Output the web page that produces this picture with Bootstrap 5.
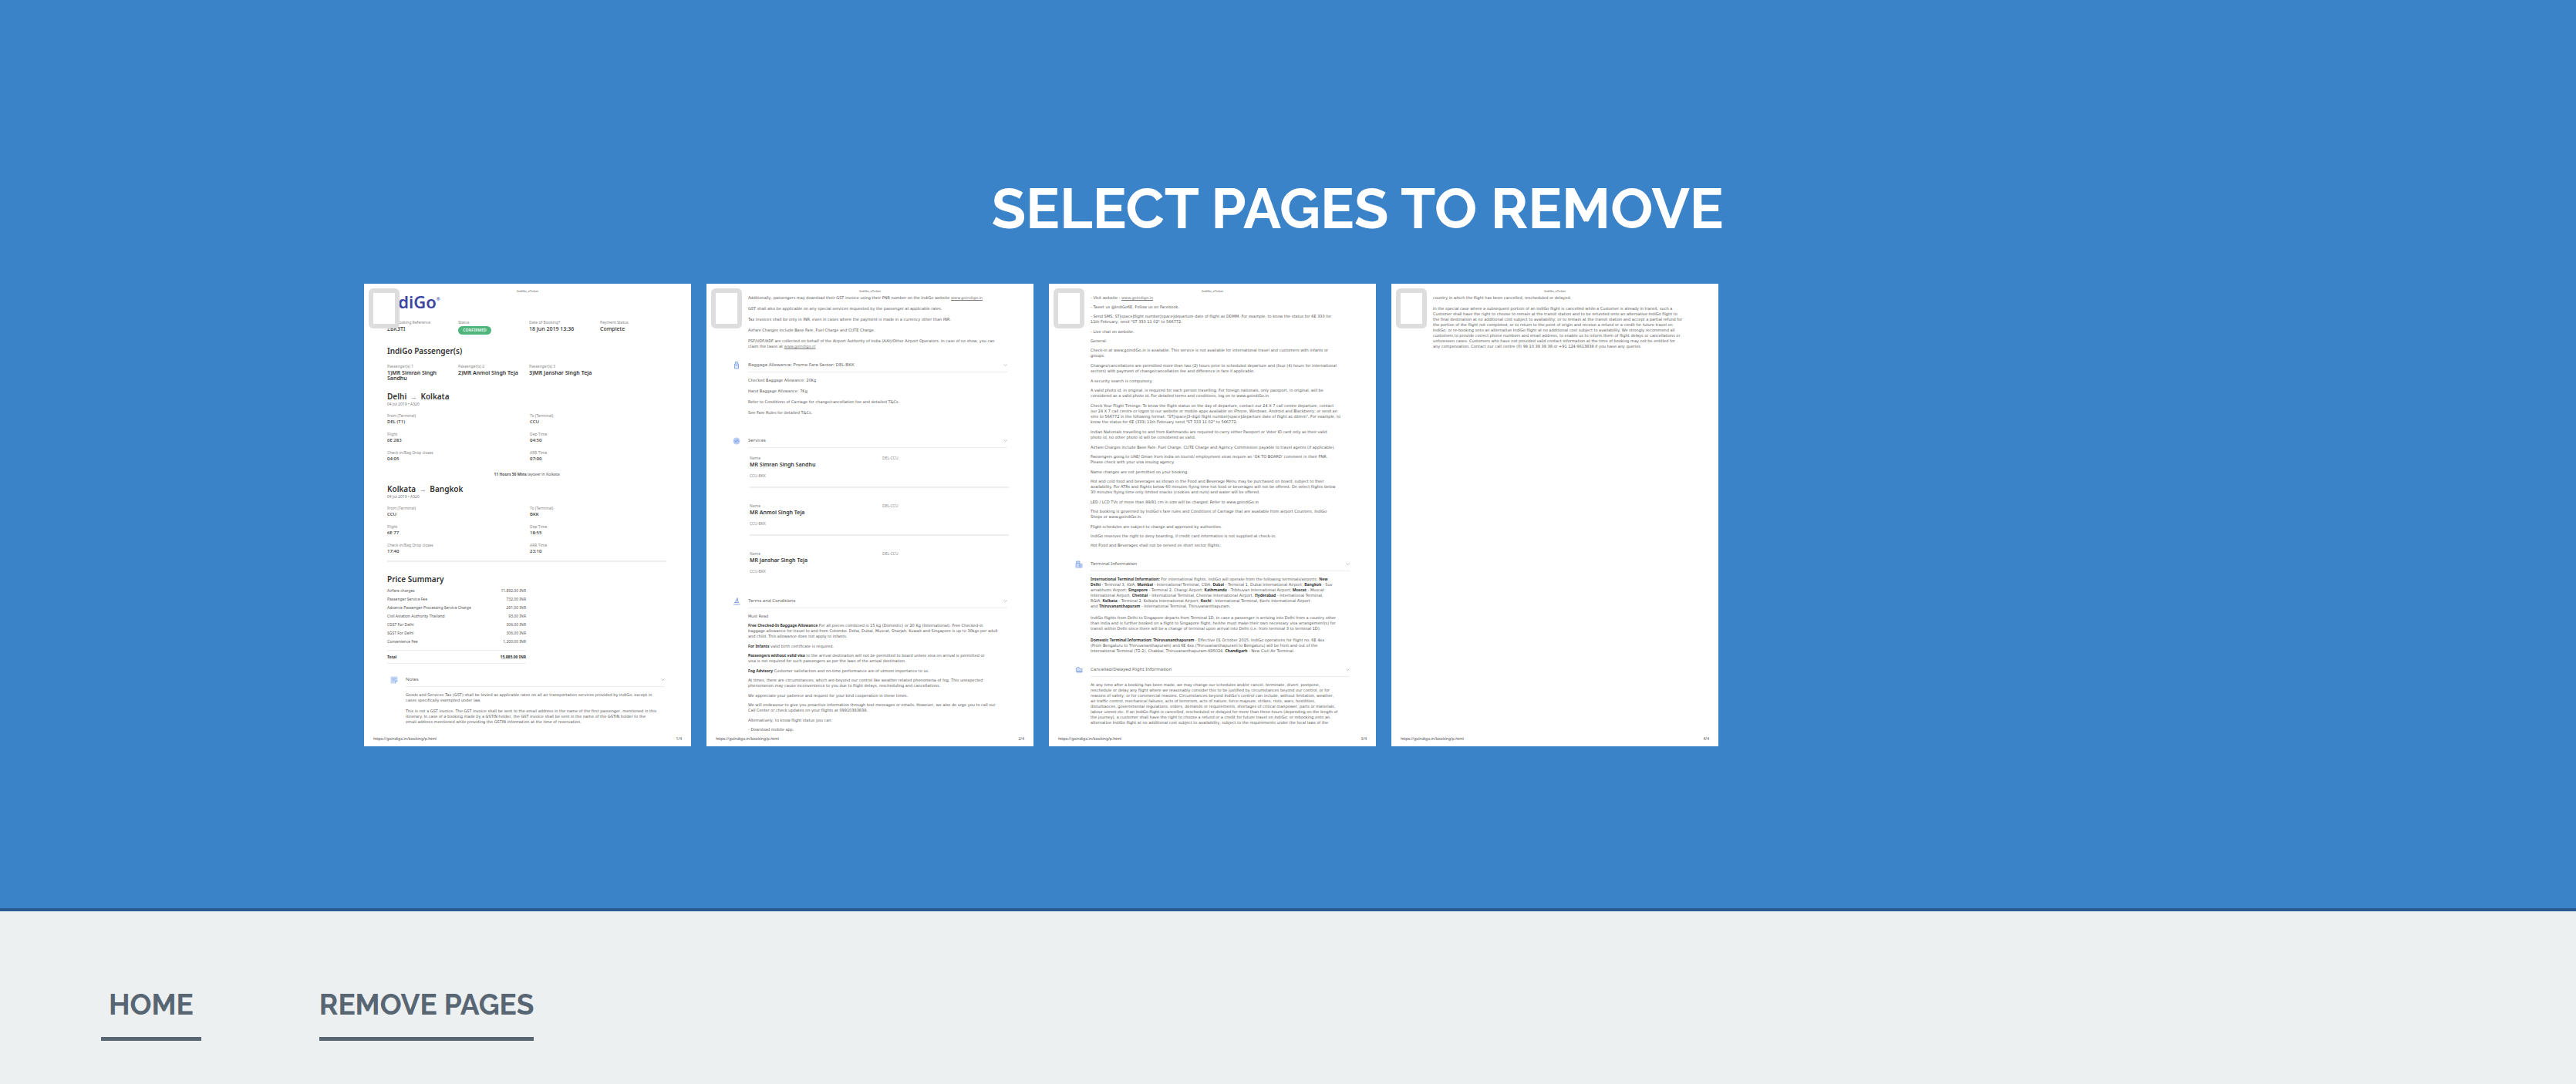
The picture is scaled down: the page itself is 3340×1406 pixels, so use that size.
<!DOCTYPE html>
<html lang="en">
<head>
<meta charset="utf-8">
<meta name="viewport" content="width=device-width, initial-scale=1">
<title>Remove Pages</title>
<link href="https://cdn.jsdelivr.net/npm/bootstrap@5.3.0/dist/css/bootstrap.min.css" rel="stylesheet">
<style>
body{background:#ecf0f1;font-family:Raleway,Lato,"Open Sans",sans-serif}
.hero{background:#3a83c8;border-bottom:4px solid #285a92;padding:230px 292px 210px 472px}
.hero h1{font-size:73px;line-height:80px;font-weight:700;color:#fff;margin-bottom:58px}
.pages{gap:20px}
.sheet{width:424px;height:600px;background:#fff;font-family:"Noto Sans","Open Sans",sans-serif;font-size:5px;line-height:7px;color:#555;padding:7px 12px 7px;white-space:nowrap}
.sheet a{color:#777}
.sheet a,.sheet b{line-height:0}
.pick{appearance:none;width:40px;height:52px;border:6px solid #ddd;border-radius:6px;background:#fff;top:6px;left:6px;margin:0;cursor:pointer}
.pick:checked{background:#3a83c8}
.runhead,.runfoot{font-size:4px;line-height:6px;color:#555}
.runfoot{font-size:5px}
.fields{padding:0 20px 0 18px}
.brand{font-size:22px;line-height:22px;font-weight:600;color:#3d46a3;margin:-1px 0 12px -8px}
.brand sup{font-size:6px;top:-10px}
.c4{width:92px}.c2{width:185px}
.lab{line-height:8px;color:#888;margin-bottom:1px}
.val{font-size:6px;font-weight:500;color:#333}
.bold6{font-size:6px;font-weight:600;color:#333}
.ok{width:43px;height:11px;line-height:11px;border-radius:6px;background:#4fb57c;color:#e4f7ec;font-size:5px;font-weight:700;text-align:center}
.meta{height:20px;margin-bottom:15px}
.meta .val{font-size:7px}
.people{margin:10px 0 14px}
.people .bold6{font-size:7px}
.sheet h2{font-size:10px;line-height:12px;height:12px;font-weight:600;color:#333;margin:0}
.arrow{color:#888;padding:0 2px;font-weight:400;font-size:9px;line-height:0}
.sub{line-height:8px;height:8px;color:#777;margin-bottom:7px}
.pair{margin-bottom:8px}
.lay{line-height:8px;margin:12px 0 9px;text-align:center}
.rule{height:2px;background:#eee}
.price{width:180px;margin-top:4px;border-collapse:separate;border-spacing:0}
.price td,.price th{padding:0;line-height:11px;height:11px;font-weight:400}
.price td{text-align:right}
.total{width:180px;height:18px;line-height:16px;border:solid #eee;border-width:1px 0;margin-top:5px;font-weight:700;color:#333}
.sect{height:18px;padding-left:22px;margin:12px 0 7px}
.sect h3{font-size:6px;line-height:17px;font-weight:400;color:#666;margin:0 0 0 10px;border-bottom:1px solid #eee;width:336px}
.sect svg{width:10px;height:10px;flex:none}
.sect .chev{width:5px;height:5px;margin:6px 0}
.copy{padding-left:42px;font-family:"DejaVu Sans","Noto Sans",sans-serif}
.copy p{margin:0 0 5px}
.copy .long{margin-bottom:6px}
.roomy p{margin-bottom:7px}
.wide-gap p{margin-bottom:8px}
.copy b{color:#333;font-weight:700;font-family:"Noto Sans",sans-serif}
.copy p:last-child{margin-bottom:0}
.first{padding-top:2px}
.guest{padding:2px 20px 0 44px}
.guest .bold6{font-size:7px}
.who{width:172px}
.seat{margin:7px 0 10px}
.guest .rule{margin-bottom:19px}
.crumbs{padding:94px 131px 40px;gap:153px}
.crumbs a{font-size:37px;line-height:50px;font-weight:700;color:#586573;text-decoration:none;padding:2px 0 17px;border-bottom:5px solid #586573}
.crumbs .home{padding-left:10px;padding-right:10px}
</style>
</head>
<body>
<svg class="d-none">
<symbol id="chev" viewBox="0 0 10 10"><path d="M1 3l4 4 4-4" fill="none" stroke="#aaa" stroke-width="1.6"/></symbol>
<symbol id="note" viewBox="0 0 20 20"><path d="M1 1h18v12l-6 6H1z" fill="#c6d8f5"/><path d="M4 6h12M4 10h9M13 19v-6h6" stroke="#8eaee8" stroke-width="1.5" fill="none"/></symbol>
<symbol id="bag" viewBox="0 0 20 20"><path d="M7 5V1h6v4M5 6h10v12H5z" fill="#e3ebfb" stroke="#8ba8e6" stroke-width="2"/><path d="M7 10h6" stroke="#8ba8e6" stroke-width="2"/></symbol>
<symbol id="serv" viewBox="0 0 20 20"><circle cx="10" cy="10" r="9" fill="#b9cdf3"/><path d="M5 8l3 6 4-8 3 6" fill="none" stroke="#7d9de2" stroke-width="1.8"/></symbol>
<symbol id="terms" viewBox="0 0 20 20"><path d="M2 18h17M4 13h12M7 12l5-10 2 10" fill="none" stroke="#8ba8e6" stroke-width="2.4"/></symbol>
<symbol id="gate" viewBox="0 0 20 20"><path d="M2 7h10v11H2zM12 9h6v9h-6zM3 2h9v5H3z" fill="#c6d8f5" stroke="#8ba8e6" stroke-width="1.6"/></symbol>
<symbol id="plane" viewBox="0 0 20 20"><path d="M2 6l7-4 3 5h6v9H4z" fill="#d3e0f8" stroke="#8ba8e6" stroke-width="1.8"/><path d="M4 13h14" stroke="#8ba8e6" stroke-width="2"/></symbol>
</svg>
<main class="hero">
<h1 class="text-center">SELECT PAGES TO REMOVE</h1>
<div class="pages d-flex flex-wrap">

<article class="sheet position-relative d-flex flex-column">
<input class="pick position-absolute" type="checkbox" aria-label="Page 1">
<div class="runhead text-center">IndiGo_eTicket</div>
<div class="fields">
<div class="brand">IndiGo<sup>®</sup></div>
<div class="meta d-flex">
<div class="c4"><div class="lab">PNR/Booking Reference</div><div class="val">ZBK3TI</div></div>
<div class="c4"><div class="lab">Status</div><div class="ok">CONFIRMED</div></div>
<div class="c4"><div class="lab">Date of Booking*</div><div class="val">18 Jun 2019 13:36</div></div>
<div><div class="lab">Payment Status</div><div class="val">Complete</div></div>
</div>
<h2>IndiGo Passenger(s)</h2>
<div class="people d-flex">
<div class="c4"><div class="lab">Passenger(s) 1</div><div class="bold6">1)MR Simran Singh<br>Sandhu</div></div>
<div class="c4"><div class="lab">Passenger(s) 2</div><div class="bold6">2)MR Anmol Singh Teja</div></div>
<div><div class="lab">Passenger(s) 3</div><div class="bold6">3)MR Janshar Singh Teja</div></div>
</div>
<h2>Delhi <span class="arrow">→</span> Kolkata</h2>
<div class="sub">04 Jul 2019 • A320</div>
<div class="pair d-flex"><div class="c2"><div class="lab">From (Terminal)</div><div class="val">DEL (T1)</div></div><div><div class="lab">To (Terminal)</div><div class="val">CCU</div></div></div>
<div class="pair d-flex"><div class="c2"><div class="lab">Flight</div><div class="val">6E 283</div></div><div><div class="lab">Dep Time</div><div class="val">04:50</div></div></div>
<div class="d-flex"><div class="c2"><div class="lab">Check-in/Bag Drop closes</div><div class="val">04:05</div></div><div><div class="lab">ARR Time</div><div class="val">07:00</div></div></div>
<div class="lay"><b>11 Hours 50 Mins</b> layover in Kolkata</div>
<h2>Kolkata <span class="arrow">→</span> Bangkok</h2>
<div class="sub">04 Jul 2019 • A320</div>
<div class="pair d-flex"><div class="c2"><div class="lab">From (Terminal)</div><div class="val">CCU</div></div><div><div class="lab">To (Terminal)</div><div class="val">BKK</div></div></div>
<div class="pair d-flex"><div class="c2"><div class="lab">Flight</div><div class="val">6E 77</div></div><div><div class="lab">Dep Time</div><div class="val">18:55</div></div></div>
<div class="pair d-flex"><div class="c2"><div class="lab">Check-in/Bag Drop closes</div><div class="val">17:40</div></div><div><div class="lab">ARR Time</div><div class="val">23:10</div></div></div>
<div class="rule mb-3"></div>
<h2>Price Summary</h2>
<table class="price">
<tr><th>Airfare charges</th><td>11,892.00 INR</td></tr>
<tr><th>Passenger Service Fee</th><td>732.00 INR</td></tr>
<tr><th>Advance Passenger Processing Service Charge</th><td>291.00 INR</td></tr>
<tr><th>Civil Aviation Authority Thailand</th><td>93.00 INR</td></tr>
<tr><th>CGST For Delhi</th><td>306.00 INR</td></tr>
<tr><th>SGST For Delhi</th><td>306.00 INR</td></tr>
<tr><th>Convenience Fee</th><td>1,200.00 INR</td></tr>
</table>
<div class="total d-flex justify-content-between"><span>Total</span><span>15,885.00 INR</span></div>
</div>
<div class="sect d-flex align-items-center"><svg><use href="#note"/></svg><h3 class="d-flex justify-content-between">Notes<svg class="chev"><use href="#chev"/></svg></h3></div>
<div class="copy roomy"><p>Goods and Services Tax (GST) shall be levied as applicable rates on all air transportation services provided by IndiGo, except in<br>cases specifically exempted under law.</p>
<p>This is not a GST invoice. The GST invoice shall be sent to the email address in the name of the first passenger, mentioned in this<br>itinerary. In case of a booking made by a GSTIN holder, the GST invoice shall be sent in the name of the GSTIN holder to the<br>email address mentioned while providing the GSTIN information at the time of reservation.</p></div>
<div class="runfoot d-flex justify-content-between mt-auto"><span>https://goindigo.in/booking/p.html</span><span>1/4</span></div>
</article>

<article class="sheet position-relative d-flex flex-column">
<input class="pick position-absolute" type="checkbox" aria-label="Page 2">
<div class="runhead text-center">IndiGo_eTicket</div>
<div class="copy roomy first"><p>Additionally, passengers may download their GST invoice using their PNR number on the IndiGo website <a href="#">www.goindigo.in</a></p>
<p>GST shall also be applicable on any special services requested by the passenger at applicable rates.</p>
<p>Tax invoices shall be only in INR, even in cases where the payment is made in a currency other than INR.</p>
<p>Airfare Charges include Base Fare, Fuel Charge and CUTE Charge.</p>
<p>PSF/UDF/ADF are collected on behalf of the Airport Authority of India (AAI)/Other Airport Operators. In case of no show, you can<br>claim the taxes at <a href="#">www.goindigo.in</a></p></div>
<div class="sect d-flex align-items-center"><svg><use href="#bag"/></svg><h3 class="d-flex justify-content-between">Baggage Allowance: Promo Fare Sector: DEL-BKK<svg class="chev"><use href="#chev"/></svg></h3></div>
<div class="copy roomy"><p>Checked Baggage Allowance: 20Kg</p><p>Hand Baggage Allowance: 7Kg</p><p>Refer to Conditions of Carriage for change/cancellation fee and detailed T&amp;Cs.</p><p>See Fare Rules for detailed T&amp;Cs.</p></div>
<div class="sect d-flex align-items-center mt-4"><svg><use href="#serv"/></svg><h3 class="d-flex justify-content-between">Services<svg class="chev"><use href="#chev"/></svg></h3></div>
<div class="guest">
<div class="d-flex"><div class="who"><div class="lab">Name</div><div class="bold6">MR Simran Singh Sandhu</div></div><div class="lab">DEL-CCU</div></div>
<div class="lab seat">CCU-BKK</div><div class="rule"></div>
<div class="d-flex"><div class="who"><div class="lab">Name</div><div class="bold6">MR Anmol Singh Teja</div></div><div class="lab">DEL-CCU</div></div>
<div class="lab seat">CCU-BKK</div><div class="rule"></div>
<div class="d-flex"><div class="who"><div class="lab">Name</div><div class="bold6">MR Janshar Singh Teja</div></div><div class="lab">DEL-CCU</div></div>
<div class="lab seat">CCU-BKK</div>
</div>
<div class="sect d-flex align-items-center mt-3"><svg><use href="#terms"/></svg><h3 class="d-flex justify-content-between">Terms and Conditions<svg class="chev"><use href="#chev"/></svg></h3></div>
<div class="copy"><p>Must Read</p>
<p class="long"><b>Free Checked-In Baggage Allowance</b> For all pieces combined is 15 kg (Domestic) or 20 Kg (International). Free Checked-in<br>baggage allowance for travel to and from Colombo, Doha, Dubai, Muscat, Sharjah, Kuwait and Singapore is up to 30kgs per adult<br>and child. This allowance does not apply to infants.</p>
<p><b>For Infants</b> valid birth certificate is required.</p>
<p class="long"><b>Passengers without valid visa</b> to the arrival destination will not be permitted to board unless visa on arrival is permitted or<br>visa is not required for such passengers as per the laws of the arrival destination.</p>
<p><b>Fog Advisory</b> Customer satisfaction and on-time performance are of utmost importance to us.</p>
<p class="long">At times, there are circumstances, which are beyond our control like weather related phenomena of fog. This unexpected<br>phenomenon may cause inconvenience to you due to flight delays, rescheduling and cancellations.</p>
<p>We appreciate your patience and request for your kind cooperation in these times.</p>
<p class="long">We will endeavour to give you proactive information through text messages or emails. However, we also do urge you to call our<br>Call Center or check updates on your flights at 09910383838.</p>
<p>Alternatively, to know flight status you can:</p>
<p>- Download mobile app.</p></div>
<div class="runfoot d-flex justify-content-between mt-auto"><span>https://goindigo.in/booking/p.html</span><span>2/4</span></div>
</article>

<article class="sheet position-relative d-flex flex-column">
<input class="pick position-absolute" type="checkbox" aria-label="Page 3">
<div class="runhead text-center">IndiGo_eTicket</div>
<div class="copy first"><p>- Visit website - <a href="#">www.goindigo.in</a></p>
<p>- Tweet us @IndiGo6E, Follow us on Facebook.</p>
<p class="long">- Send SMS, ST[space]flight number[space]departure date of flight as DDMM. For example, to know the status for 6E 333 for<br>11th February, send "ST 333 11 02" to 566772.</p>
<p>- Live chat on website.</p>
<p>General:</p>
<p class="long">Check-in at www.goindiGo.in is available. This service is not available for international travel and customers with infants or<br>groups.</p>
<p class="long">Changes/cancellations are permitted more than two (2) hours prior to scheduled departure and (four (4) hours for international<br>sectors) with payment of change/cancellation fee and difference in fare if applicable.</p>
<p>A security search is compulsory.</p>
<p class="long">A valid photo id, in original, is required for each person travelling. For foreign nationals, only passport, in original, will be<br>considered as a valid photo id. For detailed terms and conditions, log on to www.goindiGo.in</p>
<p class="long">Check Your Flight Timings: To know the flight status on the day of departure, contact our 24 X 7 call centre departure, contact<br>our 24 X 7 call centre or logon to our website or mobile apps available on iPhone, Windows, Android and Blackberry; or send an<br>sms to 566772 in the following format: "ST[space]3-digit flight number[space]departure date of flight as ddmm". For example, to<br>know the status for 6E (333) 11th February send "ST 333 11 02" to 566772.</p>
<p class="long">Indian Nationals travelling to and from Kathmandu are required to carry either Passport or Voter ID card only as their valid<br>photo id, no other photo id will be considered as valid.</p>
<p>Airfare Charges include Base Fare, Fuel Charge, CUTE Charge and Agency Commission payable to travel agents (if applicable).</p>
<p class="long">Passengers going to UAE/ Oman from India on tourist/ employment visas require an 'OK TO BOARD' comment in their PNR.<br>Please check with your visa issuing agency.</p>
<p>Name changes are not permitted on your booking.</p>
<p class="long">Hot and cold food and beverages as shown in the Food and Beverage Menu may be purchased on board, subject to their<br>availability. For ATRs and flights below 60 minutes flying time hot food or beverages will not be offered. On select flights below<br>30 minutes flying time only limited snacks (cookies and nuts) and water will be offered.</p>
<p>LED / LCD TVs of more than 99/81 cm in size will be charged. Refer to www.goindiGo.in</p>
<p class="long">This booking is governed by IndiGo's fare rules and Conditions of Carriage that are available from airport Counters, IndiGo<br>Shops or www.goindiGo.in.</p>
<p>Flight schedules are subject to change and approved by authorities.</p>
<p>IndiGo reserves the right to deny boarding, if credit card information is not supplied at check-in.</p>
<p>Hot Food and Beverages shall not be served on short sector flights.</p></div>
<div class="sect d-flex align-items-center"><svg><use href="#gate"/></svg><h3 class="d-flex justify-content-between">Terminal Information<svg class="chev"><use href="#chev"/></svg></h3></div>
<div class="copy wide-gap"><p><b>International Terminal Information:</b> For international flights, IndiGo will operate from the following terminals/airports: <b>New<br>Delhi</b> - Terminal 3, IGIA, <b>Mumbai</b> - International Terminal, CSIA, <b>Dubai</b> - Terminal 1, Dubai International Airport; <b>Bangkok</b> - Suv<br>arnabhumi Airport; <b>Singapore</b> - Terminal 2, Changi Airport; <b>Kathmandu</b> - Tribhuvan International Airport; <b>Muscat</b> - Muscat<br>International Airport, <b>Chennai</b> - International Terminal, Chennai International Airport, <b>Hyderabad</b> - International Terminal,<br>RGIA; <b>Kolkata</b> - Terminal 2, Kolkata International Airport; <b>Kochi</b> - International Terminal, Kochi International Airport<br>and <b>Thiruvananthapuram</b> - International Terminal, Thiruvananthapuram.</p>
<p>IndiGo flights from Delhi to Singapore departs from Terminal 1D. In case a passenger is arriving into Delhi from a country other<br>than India and is further booked on a flight to Singapore flight, he/she must make their own necessary visa arrangement(s) for<br>transit within Delhi since there will be a change of terminal upon arrival into Delhi (i.e. from terminal 3 to terminal 1D).</p>
<p><b>Domestic Terminal Information: Thiruvananthapuram</b> - Effective 01 October 2015, IndiGo operations for flight no. 6E 4xx<br>(From Bengaluru to Thiruvananthapuram) and 6E 4xx (Thiruvananthapuram to Bengaluru) will be from and out of the<br>International Terminal (T2-2), Chakkai, Thiruvananthapuram-695024. <b>Chandigarh</b> - New Civil Air Terminal.</p></div>
<div class="sect d-flex align-items-center"><svg><use href="#plane"/></svg><h3 class="d-flex justify-content-between">Cancelled/Delayed Flight Information<svg class="chev"><use href="#chev"/></svg></h3></div>
<div class="copy"><p>At any time after a booking has been made, we may change our schedules and/or cancel, terminate, divert, postpone,<br>reschedule or delay any flight where we reasonably consider this to be justified by circumstances beyond our control, or for<br>reasons of safety, or for commercial reasons. Circumstances beyond IndiGo's control can include, without limitation, weather,<br>air traffic control, mechanical failures, acts of terrorism, acts of nature, force majeure, strikes, riots, wars, hostilities,<br>disturbances, governmental regulations, orders, demands or requirements, shortages of critical manpower, parts or materials,<br>labour unrest etc. If an IndiGo flight is cancelled, rescheduled or delayed for more than three hours (depending on the length of<br>the journey), a customer shall have the right to choose a refund or a credit for future travel on IndiGo; or rebooking onto an<br>alternative IndiGo flight at no additional cost subject to availability, subject to the requirements under the local laws of the</p></div>
<div class="runfoot d-flex justify-content-between mt-auto"><span>https://goindigo.in/booking/p.html</span><span>3/4</span></div>
</article>

<article class="sheet position-relative d-flex flex-column">
<input class="pick position-absolute" type="checkbox" aria-label="Page 4">
<div class="runhead text-center">IndiGo_eTicket</div>
<div class="copy roomy first"><p>country in which the flight has been cancelled, rescheduled or delayed.</p>
<p>In the special case where a subsequent portion of an IndiGo flight is cancelled while a Customer is already in transit, such a<br>Customer shall have the right to choose to remain at the transit station and to be refunded onto an alternative IndiGo flight to<br>the final destination at no additional cost subject to availability; or to remain at the transit station and accept a partial refund for<br>the portion of the flight not completed; or to return to the point of origin and receive a refund or a credit for future travel on<br>IndiGo; or re-booking onto an alternative IndiGo flight at no additional cost subject to availability. We strongly recommend all<br>customers to provide correct phone numbers and email address, to enable us to inform them of flight delays or cancellations or<br>unforeseen cases. Customers who have not provided valid contact information at the time of booking may not be entitled for<br>any compensation. Contact our call centre (0) 99 10 38 38 38 or +91 124 6613838 if you have any queries.</p></div>
<div class="runfoot d-flex justify-content-between mt-auto"><span>https://goindigo.in/booking/p.html</span><span>4/4</span></div>
</article>
</div>
</main>
<nav class="crumbs d-flex flex-wrap" aria-label="Breadcrumb"><a class="home" href="#">HOME</a><a href="#">REMOVE PAGES</a></nav>
<script src="https://cdn.jsdelivr.net/npm/bootstrap@5.3.0/dist/js/bootstrap.bundle.min.js"></script>
</body>
</html>
